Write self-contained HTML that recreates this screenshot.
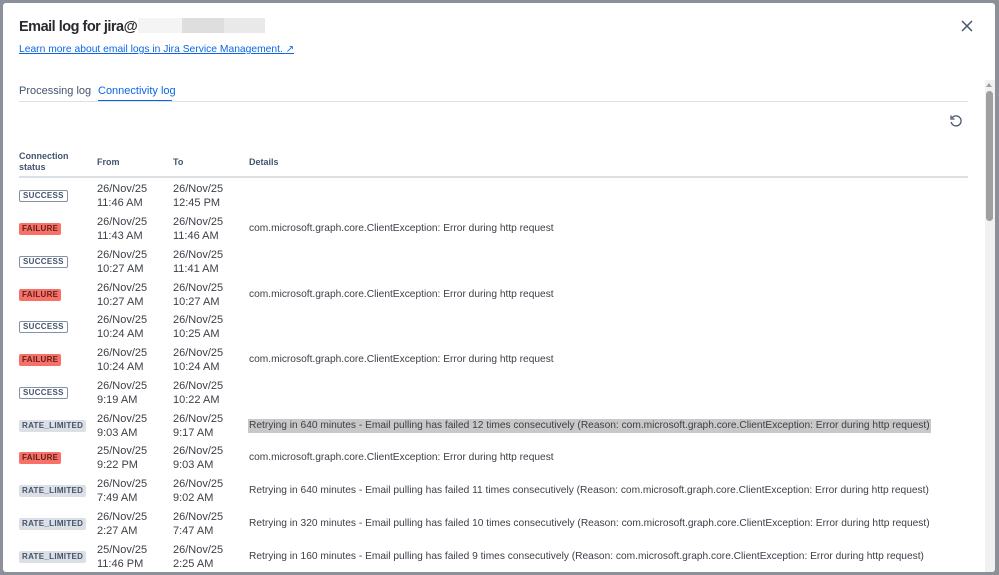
<!DOCTYPE html>
<html><head><style>
body{margin:0;width:999px;height:575px;background:#8b9099;font-family:"Liberation Sans",sans-serif;overflow:hidden;position:relative}
.m{position:absolute;left:3px;top:3px;width:992px;height:569px;background:#fff;border-radius:3px;overflow:hidden}
.a{position:absolute}
h1{position:absolute;left:16px;top:15px;margin:0;font-size:14.5px;letter-spacing:-0.5px;font-weight:bold;color:#292a2e;white-space:nowrap}
h1 i{display:inline-block;height:15px;vertical-align:-2px}
.row{position:absolute;left:0;width:960px;height:33px;font-size:11px;color:#3b3f46}
.b{position:absolute;left:16px;top:10px;font-size:8px;font-weight:bold;padding:1px 3px;border-radius:2px;letter-spacing:.3px;line-height:10px}
.s{border:1px solid #8590a2;color:#44546f;background:#fff;padding:0 3px}
.f{background:#f87168;color:#5d1f1a}
.r{background:#dcdfe4;color:#44546f}
.d{position:absolute;top:2px;line-height:14px}
.t{position:absolute;left:246px;top:9px;line-height:14px;white-space:nowrap;font-size:10.2px}
</style></head><body>
<div class="m">
<h1>Email log for jira@<i style="width:44px;background:#f4f4f4;margin-left:1px"></i><i style="width:42px;background:#dedede"></i><i style="width:41px;background:#e9e9e9"></i></h1>
<div class="a" style="left:16px;top:41px;font-size:10.3px;color:#0c66e4;text-decoration:underline">Learn more about email logs in Jira Service Management. <span style="font-size:10px">↗</span></div>
<svg class="a" style="left:958px;top:17px" width="12" height="12"><path d="M1 1L11 11M11 1L1 11" stroke="#44546f" stroke-width="1.5"/></svg>
<div class="a" style="left:16px;top:82px;font-size:11px;color:#44546f">Processing log</div>
<div class="a" style="left:95px;top:82px;font-size:11px;color:#0c66e4">Connectivity log</div>
<div class="a" style="left:95px;top:97px;width:74px;height:2px;background:#0c66e4"></div>
<div class="a" style="left:16px;top:98px;width:949px;height:1px;background:#dcdfe4"></div>
<svg class="a" style="left:946px;top:111px" width="14" height="14" viewBox="0 0 14 14"><path d="M3 4A5 5 0 1 1 2.2 8" fill="none" stroke="#44546f" stroke-width="1.3"/><path d="M2 1.5V5H5.5" fill="none" stroke="#44546f" stroke-width="1.3"/></svg>
<div class="a" style="left:16px;top:148px;font-size:9px;font-weight:bold;color:#44546f;line-height:11px">Connection<br>status</div>
<div class="a" style="left:94px;top:154px;font-size:9px;font-weight:bold;color:#44546f">From</div>
<div class="a" style="left:170px;top:154px;font-size:9px;font-weight:bold;color:#44546f">To</div>
<div class="a" style="left:246px;top:154px;font-size:9px;font-weight:bold;color:#44546f">Details</div>
<div class="a" style="left:16px;top:173px;width:949px;height:2px;background:#dcdfe4"></div>

<div class="row" style="top:177px"><span class="b s">SUCCESS</span><div class="d" style="left:94px">26/Nov/25<br>11:46 AM</div><div class="d" style="left:170px">26/Nov/25<br>12:45 PM</div></div>
<div class="row" style="top:210px"><span class="b f">FAILURE</span><div class="d" style="left:94px">26/Nov/25<br>11:43 AM</div><div class="d" style="left:170px">26/Nov/25<br>11:46 AM</div><div class="t">com.microsoft.graph.core.ClientException: Error during http request</div></div>
<div class="row" style="top:243px"><span class="b s">SUCCESS</span><div class="d" style="left:94px">26/Nov/25<br>10:27 AM</div><div class="d" style="left:170px">26/Nov/25<br>11:41 AM</div></div>
<div class="row" style="top:276px"><span class="b f">FAILURE</span><div class="d" style="left:94px">26/Nov/25<br>10:27 AM</div><div class="d" style="left:170px">26/Nov/25<br>10:27 AM</div><div class="t">com.microsoft.graph.core.ClientException: Error during http request</div></div>
<div class="row" style="top:308px"><span class="b s">SUCCESS</span><div class="d" style="left:94px">26/Nov/25<br>10:24 AM</div><div class="d" style="left:170px">26/Nov/25<br>10:25 AM</div></div>
<div class="row" style="top:341px"><span class="b f">FAILURE</span><div class="d" style="left:94px">26/Nov/25<br>10:24 AM</div><div class="d" style="left:170px">26/Nov/25<br>10:24 AM</div><div class="t">com.microsoft.graph.core.ClientException: Error during http request</div></div>
<div class="row" style="top:374px"><span class="b s">SUCCESS</span><div class="d" style="left:94px">26/Nov/25<br>9:19 AM</div><div class="d" style="left:170px">26/Nov/25<br>10:22 AM</div></div>
<div class="row" style="top:407px"><span class="b r">RATE_LIMITED</span><div class="d" style="left:94px">26/Nov/25<br>9:03 AM</div><div class="d" style="left:170px">26/Nov/25<br>9:17 AM</div><div class="t" style="background:#c8c8c8;padding:0 1px;left:245px">Retrying in 640 minutes - Email pulling has failed 12 times consecutively (Reason: com.microsoft.graph.core.ClientException: Error during http request)</div></div>
<div class="row" style="top:439px"><span class="b f">FAILURE</span><div class="d" style="left:94px">25/Nov/25<br>9:22 PM</div><div class="d" style="left:170px">26/Nov/25<br>9:03 AM</div><div class="t">com.microsoft.graph.core.ClientException: Error during http request</div></div>
<div class="row" style="top:472px"><span class="b r">RATE_LIMITED</span><div class="d" style="left:94px">26/Nov/25<br>7:49 AM</div><div class="d" style="left:170px">26/Nov/25<br>9:02 AM</div><div class="t">Retrying in 640 minutes - Email pulling has failed 11 times consecutively (Reason: com.microsoft.graph.core.ClientException: Error during http request)</div></div>
<div class="row" style="top:505px"><span class="b r">RATE_LIMITED</span><div class="d" style="left:94px">26/Nov/25<br>2:27 AM</div><div class="d" style="left:170px">26/Nov/25<br>7:47 AM</div><div class="t">Retrying in 320 minutes - Email pulling has failed 10 times consecutively (Reason: com.microsoft.graph.core.ClientException: Error during http request)</div></div>
<div class="row" style="top:538px"><span class="b r">RATE_LIMITED</span><div class="d" style="left:94px">25/Nov/25<br>11:46 PM</div><div class="d" style="left:170px">26/Nov/25<br>2:25 AM</div><div class="t">Retrying in 160 minutes - Email pulling has failed 9 times consecutively (Reason: com.microsoft.graph.core.ClientException: Error during http request)</div></div>

<div class="a" style="left:982px;top:77px;width:10px;height:492px;background:#f1f1f1"></div>
<div class="a" style="left:983px;top:88px;width:7px;height:130px;background:#a0a0a0;border-radius:4px"></div>
<div class="a" style="left:983px;top:80px;width:0;height:0;border-left:3.5px solid transparent;border-right:3.5px solid transparent;border-bottom:4px solid #a0a0a0"></div>
</div>
</body></html>
